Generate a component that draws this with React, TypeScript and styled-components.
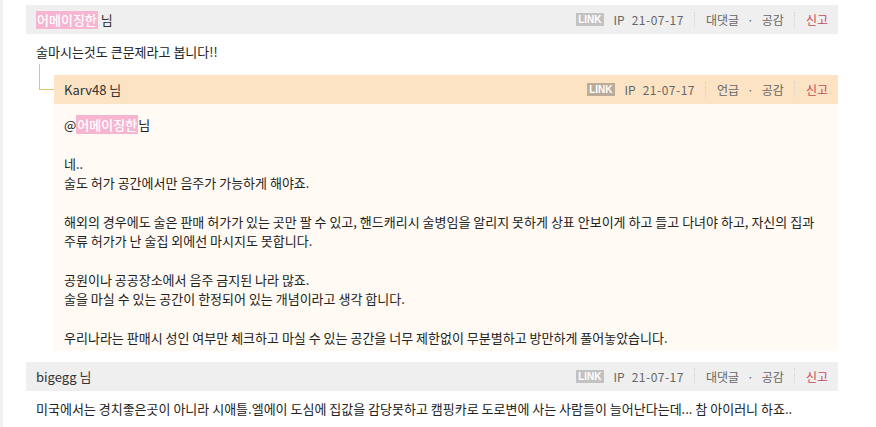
import styled, { createGlobalStyle } from 'styled-components'

const GlobalStyle = createGlobalStyle`
  html, body { margin: 0; padding: 0; background: #fff; }
  body {
    font-family: "Noto Sans CJK KR", "Noto Sans", sans-serif;
    font-size: 13px;
    color: #222;
  }
`

const Frame = styled.div`
  border-left: 3px solid #f1f1f1;
  min-height: 427px;
  padding: 5px 0 0 23px;
  box-sizing: border-box;
`

const List = styled.div`
  width: 812px;
`

const Header = styled.div<{ $reply?: boolean }>`
  display: flex;
  align-items: center;
  height: 29px;
  padding: 0 10px;
  background: ${p => (p.$reply ? '#fbe3c4' : '#efefef')};
`

const Author = styled.div`
  flex: 1;
  display: flex;
  align-items: center;
  font-size: 13px;
  color: #333;
`

const Nick = styled.span`
  background: #f6b5d1;
  color: #fff;
  font-weight: 500;
  padding: 0 1px;
  line-height: 18px;
`

const Nim = styled.span`
  margin-left: 3px;
`

const Meta = styled.div`
  display: flex;
  align-items: center;
  font-size: 12px;
  color: #666;
`

const LinkBadge = styled.span<{ $reply?: boolean }>`
  background: ${p => (p.$reply ? '#bcab98' : '#c2c2c2')};
  color: #fff;
  font-family: "Liberation Sans", sans-serif;
  font-weight: bold;
  font-size: 10px;
  line-height: 13px;
  padding: 0 2px;
  margin-right: 10px;
`

const Ip = styled.span`
  margin-right: 7px;
`

const Date = styled.span`
  letter-spacing: 0.5px;
`

const Divider = styled.span`
  width: 0;
  height: 16px;
  border-left: 1px dotted #d2d2d2;
  margin: 0 11px 0 10px;
`

const Dot = styled.span`
  margin: 0 8px;
`

const Report = styled.span`
  color: #c94a5c;
`

const Body = styled.div`
  padding: 8px 10px 14px;
  line-height: 19.3px;
`

const Reply = styled.div`
  position: relative;
  margin-left: 28px;
  &::before {
    content: '';
    position: absolute;
    left: -15px;
    top: -11px;
    width: 14px;
    height: 25px;
    border-left: 1px solid #e3c565;
    border-bottom: 1px solid #e3c565;
  }
`

const ReplyBody = styled.div`
  background: #fffaf3;
  padding: 11px 10px 4px;
  line-height: 19.3px;
  margin-bottom: 11px;
`

const Para = styled.p`
  margin: 0 0 19.3px;
  &:last-child { margin-bottom: 0; }
`

function MetaBar({ reply, action }: { reply?: boolean; action: string }) {
  return (
    <Meta>
      <LinkBadge $reply={reply}>LINK</LinkBadge>
      <Ip>IP</Ip>
      <Date>21-07-17</Date>
      <Divider />
      <span>{action}</span>
      <Dot>·</Dot>
      <span>공감</span>
      <Divider />
      <Report>신고</Report>
    </Meta>
  )
}

export default function App() {
  return (
    <>
      <GlobalStyle />
      <Frame>
        <List>
          <Header>
            <Author>
              <Nick>어메이징한</Nick>
              <Nim>님</Nim>
            </Author>
            <MetaBar action="대댓글" />
          </Header>
          <Body>술마시는것도 큰문제라고 봅니다!!</Body>

          <Reply>
            <Header $reply>
              <Author>
                Karv48<Nim>님</Nim>
              </Author>
              <MetaBar reply action="언급" />
            </Header>
            <ReplyBody>
              <Para>
                @<Nick>어메이징한</Nick>님
              </Para>
              <Para>
                네..
                <br />
                술도 허가 공간에서만 음주가 가능하게 해야죠.
              </Para>
              <Para>
                해외의 경우에도 술은 판매 허가가 있는 곳만 팔 수 있고, 핸드캐리시 술병임을 알리지 못하게 상표 안보이게 하고 들고 다녀야 하고, 자신의 집과
                <br />
                주류 허가가 난 술집 외에선 마시지도 못합니다.
              </Para>
              <Para>
                공원이나 공공장소에서 음주 금지된 나라 많죠.
                <br />
                술을 마실 수 있는 공간이 한정되어 있는 개념이라고 생각 합니다.
              </Para>
              <Para>우리나라는 판매시 성인 여부만 체크하고 마실 수 있는 공간을 너무 제한없이 무분별하고 방만하게 풀어놓았습니다.</Para>
            </ReplyBody>
          </Reply>

          <Header>
            <Author>
              bigegg<Nim>님</Nim>
            </Author>
            <MetaBar action="대댓글" />
          </Header>
          <Body>미국에서는 경치좋은곳이 아니라 시애틀.엘에이 도심에 집값을 감당못하고 캠핑카로 도로변에 사는 사람들이 늘어난다는데... 참 아이러니 하죠..</Body>
        </List>
      </Frame>
    </>
  )
}
